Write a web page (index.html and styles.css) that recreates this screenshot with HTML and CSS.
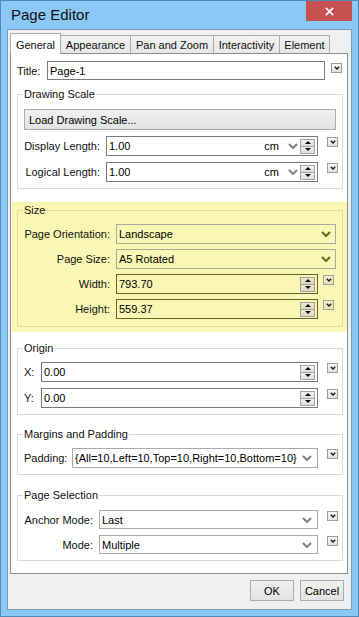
FILE: index.html
```html
<!DOCTYPE html>
<html lang="en">
<head>
    <meta charset="UTF-8">
    <meta name="viewport" content="width=device-width, initial-scale=1.0">
    <title>Page Editor</title>
    <link rel="stylesheet" href="styles.css">
</head>
<body>
<div class="window">
    <div class="titlebar">
        <span class="caption">Page Editor</span>
        <button class="close"><svg width="9" height="9" viewBox="0 0 9 9"><path d="M.8 .8l7.4 7.4M8.2 .8L.8 8.2"/></svg></button>
    </div>

    <div class="client">
        <div class="tabs">
            <div class="tab active t-general">General</div>
            <div class="tab t-appearance">Appearance</div>
            <div class="tab t-pan">Pan and Zoom</div>
            <div class="tab t-inter">Interactivity</div>
            <div class="tab t-element">Element</div>
        </div>

        <div class="panel">
            <div class="row row-title">
                <span class="lbl lbl-title">Title:</span>
                <div class="field w-title"><span class="val">Page-1</span></div>
                <span class="mini mini-title"><svg width="6" height="4" viewBox="0 0 6 4"><path d="M.8 .7L3 2.9 5.2 .7"/></svg></span>
            </div>

            <!-- drawing scale -->
            <fieldset class="group group-scale">
                <legend>Drawing Scale</legend>
                <button class="load">Load Drawing Scale...</button>
                <div class="row">
                    <span class="lbl lbl-scale">Display Length:</span>
                    <div class="field num w-scale">
                        <span class="val">1.00</span>
                        <span class="unit">cm</span>
                        <svg class="chev" width="10" height="6" viewBox="0 0 10 6"><path d="M1 1l4 4 4-4"/></svg>
                        <span class="spin"><span class="up"></span><span class="dn"></span></span>
                    </div>
                    <span class="mini"><svg width="6" height="4" viewBox="0 0 6 4"><path d="M.8 .7L3 2.9 5.2 .7"/></svg></span>
                </div>
                <div class="row">
                    <span class="lbl lbl-scale">Logical Length:</span>
                    <div class="field num w-scale">
                        <span class="val">1.00</span>
                        <span class="unit">cm</span>
                        <svg class="chev" width="10" height="6" viewBox="0 0 10 6"><path d="M1 1l4 4 4-4"/></svg>
                        <span class="spin"><span class="up"></span><span class="dn"></span></span>
                    </div>
                    <span class="mini"><svg width="6" height="4" viewBox="0 0 6 4"><path d="M.8 .7L3 2.9 5.2 .7"/></svg></span>
                </div>
            </fieldset>

            <!-- size (highlighted) -->
            <div class="size-block">
                <fieldset class="group group-size">
                    <legend>Size</legend>
                    <div class="row">
                        <span class="lbl lbl-size">Page Orientation:</span>
                        <div class="field select w-size-sel">
                            <span class="val">Landscape</span>
                            <svg class="chev" width="10" height="6" viewBox="0 0 10 6"><path d="M1 1l4 4 4-4"/></svg>
                        </div>
                    </div>
                    <div class="row">
                        <span class="lbl lbl-size">Page Size:</span>
                        <div class="field select w-size-sel">
                            <span class="val">A5 Rotated</span>
                            <svg class="chev" width="10" height="6" viewBox="0 0 10 6"><path d="M1 1l4 4 4-4"/></svg>
                        </div>
                    </div>
                    <div class="row">
                        <span class="lbl lbl-size">Width:</span>
                        <div class="field num strong w-size-num">
                            <span class="val">793.70</span>
                            <span class="spin"><span class="up"></span><span class="dn"></span></span>
                        </div>
                        <span class="mini mini-size"><svg width="6" height="4" viewBox="0 0 6 4"><path d="M.8 .7L3 2.9 5.2 .7"/></svg></span>
                    </div>
                    <div class="row">
                        <span class="lbl lbl-size">Height:</span>
                        <div class="field num strong w-size-num">
                            <span class="val">559.37</span>
                            <span class="spin"><span class="up"></span><span class="dn"></span></span>
                        </div>
                        <span class="mini mini-size"><svg width="6" height="4" viewBox="0 0 6 4"><path d="M.8 .7L3 2.9 5.2 .7"/></svg></span>
                    </div>
                </fieldset>
            </div>

            <!-- origin -->
            <fieldset class="group group-origin">
                <legend>Origin</legend>
                <div class="row">
                    <span class="lbl lbl-origin">X:</span>
                    <div class="field num w-origin">
                        <span class="val">0.00</span>
                        <span class="spin"><span class="up"></span><span class="dn"></span></span>
                    </div>
                    <span class="mini"><svg width="6" height="4" viewBox="0 0 6 4"><path d="M.8 .7L3 2.9 5.2 .7"/></svg></span>
                </div>
                <div class="row">
                    <span class="lbl lbl-origin">Y:</span>
                    <div class="field num w-origin">
                        <span class="val">0.00</span>
                        <span class="spin"><span class="up"></span><span class="dn"></span></span>
                    </div>
                    <span class="mini"><svg width="6" height="4" viewBox="0 0 6 4"><path d="M.8 .7L3 2.9 5.2 .7"/></svg></span>
                </div>
            </fieldset>

            <!-- margins -->
            <fieldset class="group group-margins">
                <legend>Margins and Padding</legend>
                <div class="row">
                    <span class="lbl lbl-pad">Padding:</span>
                    <div class="field select w-pad">
                        <span class="val">{All=10,Left=10,Top=10,Right=10,Bottom=10}</span>
                        <svg class="chev" width="10" height="6" viewBox="0 0 10 6"><path d="M1 1l4 4 4-4"/></svg>
                    </div>
                    <span class="mini"><svg width="6" height="4" viewBox="0 0 6 4"><path d="M.8 .7L3 2.9 5.2 .7"/></svg></span>
                </div>
            </fieldset>

            <!-- page selection -->
            <fieldset class="group group-select">
                <legend>Page Selection</legend>
                <div class="row">
                    <span class="lbl lbl-sel">Anchor Mode:</span>
                    <div class="field select short w-sel">
                        <span class="val">Last</span>
                        <svg class="chev" width="10" height="6" viewBox="0 0 10 6"><path d="M1 1l4 4 4-4"/></svg>
                    </div>
                    <span class="mini"><svg width="6" height="4" viewBox="0 0 6 4"><path d="M.8 .7L3 2.9 5.2 .7"/></svg></span>
                </div>
                <div class="row">
                    <span class="lbl lbl-sel">Mode:</span>
                    <div class="field select short w-sel">
                        <span class="val">Multiple</span>
                        <svg class="chev" width="10" height="6" viewBox="0 0 10 6"><path d="M1 1l4 4 4-4"/></svg>
                    </div>
                    <span class="mini"><svg width="6" height="4" viewBox="0 0 6 4"><path d="M.8 .7L3 2.9 5.2 .7"/></svg></span>
                </div>
            </fieldset>
        </div>

        <div class="footer">
            <button class="btn">OK</button>
            <button class="btn">Cancel</button>
        </div>
    </div>
</div>
</body>
</html>
```

FILE: styles.css
```css
* {
    margin: 0;
    padding: 0;
    box-sizing: border-box;
}

body {
    font-family: "Liberation Sans", Arial, sans-serif;
    font-size: 11px;
    color: #000;
    background: #8ac8f6;
}

button {
    font-family: inherit;
    font-size: 11px;
    color: #000;
}

.window {
    width: 359px;
    height: 617px;
    border: 1px solid #5288b6;
    background: #8ac8f6;
    padding: 0 6px 6px;
    display: flex;
    flex-direction: column;
}

.titlebar {
    height: 28px;
    flex: none;
    display: flex;
    justify-content: space-between;
    padding-left: 4px;
}

.caption {
    font-size: 15px;
    line-height: 28px;
    color: #111;
}

.close {
    width: 46px;
    height: 20px;
    background: #c75050;
    border: none;
    display: flex;
    align-items: center;
    justify-content: center;
}

.close path {
    stroke: #fff;
    stroke-width: 1.7;
    fill: none;
}

.client {
    flex: 1;
    border: 1px solid #7d9bb6;
    background: #f0f0f0;
    display: flex;
    flex-direction: column;
    padding: 3px 3px 0 2px;
}

/* tabs */
.tabs {
    height: 20px;
    display: flex;
    align-items: flex-end;
    flex: none;
}

.tab {
    height: 18px;
    border: 1px solid #acacac;
    border-bottom: none;
    background: linear-gradient(#f3f3f3, #e6e6e6);
    padding-top: 2px;
    line-height: 14px;
    text-align: center;
    margin-left: -1px;
    color: #111;
}

.tab.active {
    height: 21px;
    margin-bottom: -1px;
    margin-left: 0;
    padding-top: 4px;
    background: #fff;
    position: relative;
    z-index: 1;
}

.t-general { width: 51px; }
.t-appearance { width: 71px; }
.t-pan { width: 84px; }
.t-inter { width: 67px; }
.t-element { width: 51px; }

.panel {
    flex: 1;
    border: 1px solid #8c8e94;
    background: #fff;
    padding: 7px 4px 0 6px;
    display: flex;
    flex-direction: column;
}

/* rows and fields */
.row {
    display: flex;
    align-items: center;
}

.lbl {
    flex: none;
    white-space: nowrap;
    color: #111;
}

.lbl-title { width: 27px; margin-right: 3px; }
.lbl-scale { width: 76px; margin-right: 6px; text-align: right; }
.lbl-size { width: 86px; margin-right: 6px; text-align: right; }
.lbl-origin { width: 12px; margin-right: 5px; }
.lbl-pad { width: 42px; margin-right: 6px; }
.lbl-sel { width: 69px; margin-right: 6px; text-align: right; }

.field {
    flex: none;
    height: 20px;
    border: 1px solid #7a7a7a;
    background: #fff;
    display: flex;
    align-items: center;
    padding-left: 2px;
    white-space: nowrap;
    overflow: hidden;
}

.field .val {
    flex: 1;
}

.w-title { width: 278px; height: 19px; }
.w-scale { width: 212px; }
.w-size-sel { width: 220px; }
.w-size-num { width: 202px; }
.w-origin { width: 277px; }
.w-pad { width: 246px; }
.w-sel { width: 219px; }

.field.select {
    border-color: #ababab;
    padding-right: 5px;
}

.field.short {
    height: 19px;
}

.unit {
    margin-right: 9px;
}

.chev {
    flex: none;
}

.chev path {
    fill: none;
    stroke: #808080;
    stroke-width: 2;
}

.spin {
    flex: none;
    width: 15px;
    height: 15px;
    margin: 0 2px 0 2px;
    display: flex;
    flex-direction: column;
}

.spin span {
    height: 8px;
    border: 1px solid #a5a5a5;
    background: linear-gradient(#f0f0f0, #dedede);
    display: flex;
    align-items: center;
    justify-content: center;
}

.spin .dn {
    margin-top: -1px;
}

.spin .up::after {
    content: "";
    border-left: 3px solid transparent;
    border-right: 3px solid transparent;
    border-bottom: 3px solid #111;
}

.spin .dn::after {
    content: "";
    border-left: 3px solid transparent;
    border-right: 3px solid transparent;
    border-top: 3px solid #111;
}

.mini {
    flex: none;
    align-self: flex-start;
    width: 11px;
    height: 10px;
    margin: 1px 0 0 9px;
    border: 1px solid #9d9d9d;
    background: linear-gradient(#f8f8f8, #e0e0e0);
    display: flex;
    align-items: center;
    justify-content: center;
}

.mini path {
    fill: none;
    stroke: #1a1a1a;
    stroke-width: 1.4;
}

.mini-title {
    margin: 2px 0 0 6px;
}

/* group boxes */
.group {
    border: 1px solid #d9d9d9;
    margin-top: 13px;
    padding: 7px 4px 6px 6px;
    min-width: 0;
}

.group legend {
    padding: 0 1px;
    margin-left: -1px;
    line-height: 13px;
    color: #111;
}

.group .row + .row {
    margin-top: 6px;
}

.group-scale {
    margin-top: 8px;
    padding-top: 8px;
}

.load {
    width: 312px;
    height: 21px;
    border: 1px solid #acacac;
    background: linear-gradient(#f0f0f0, #e3e3e3);
    text-align: left;
    padding-left: 4px;
    margin-bottom: 6px;
}

/* highlighted size block */
.size-block {
    background: #faf7b4;
    margin: 13px -4px 0 -5px;
    padding: 2px 4px 5px 5px;
}

.group-size {
    margin-top: 0;
    border-color: #e1dd98;
    padding-bottom: 7px;
}

.group-size .row + .row {
    margin-top: 5px;
}

.size-block .field {
    background: #faf7b4;
}

.size-block .field.select {
    border-color: #aaa9a0;
    padding-right: 4px;
}

.size-block .field.strong {
    border-color: #66622a;
}

.size-block .chev path {
    stroke: #6f6a24;
    stroke-width: 2.2;
}

.size-block .spin span {
    background: linear-gradient(#eeebcf, #dcd9bd);
    border-color: #a3a29a;
}

.mini-size {
    margin-left: 5px;
    background: linear-gradient(#f4f0c6, #e4e0b2);
    border-color: #a3a29a;
}

.group-origin {
    margin-top: 10px;
}

.group-select {
    margin-top: 14px;
    padding-top: 8px;
}

/* dialog buttons */
.footer {
    flex: none;
    display: flex;
    justify-content: flex-end;
    gap: 6px;
    padding: 6px 4px 8px 0;
}

.btn {
    width: 44px;
    height: 21px;
    border: 1px solid #acacac;
    background: linear-gradient(#f0f0f0, #e3e3e3);
}
```
